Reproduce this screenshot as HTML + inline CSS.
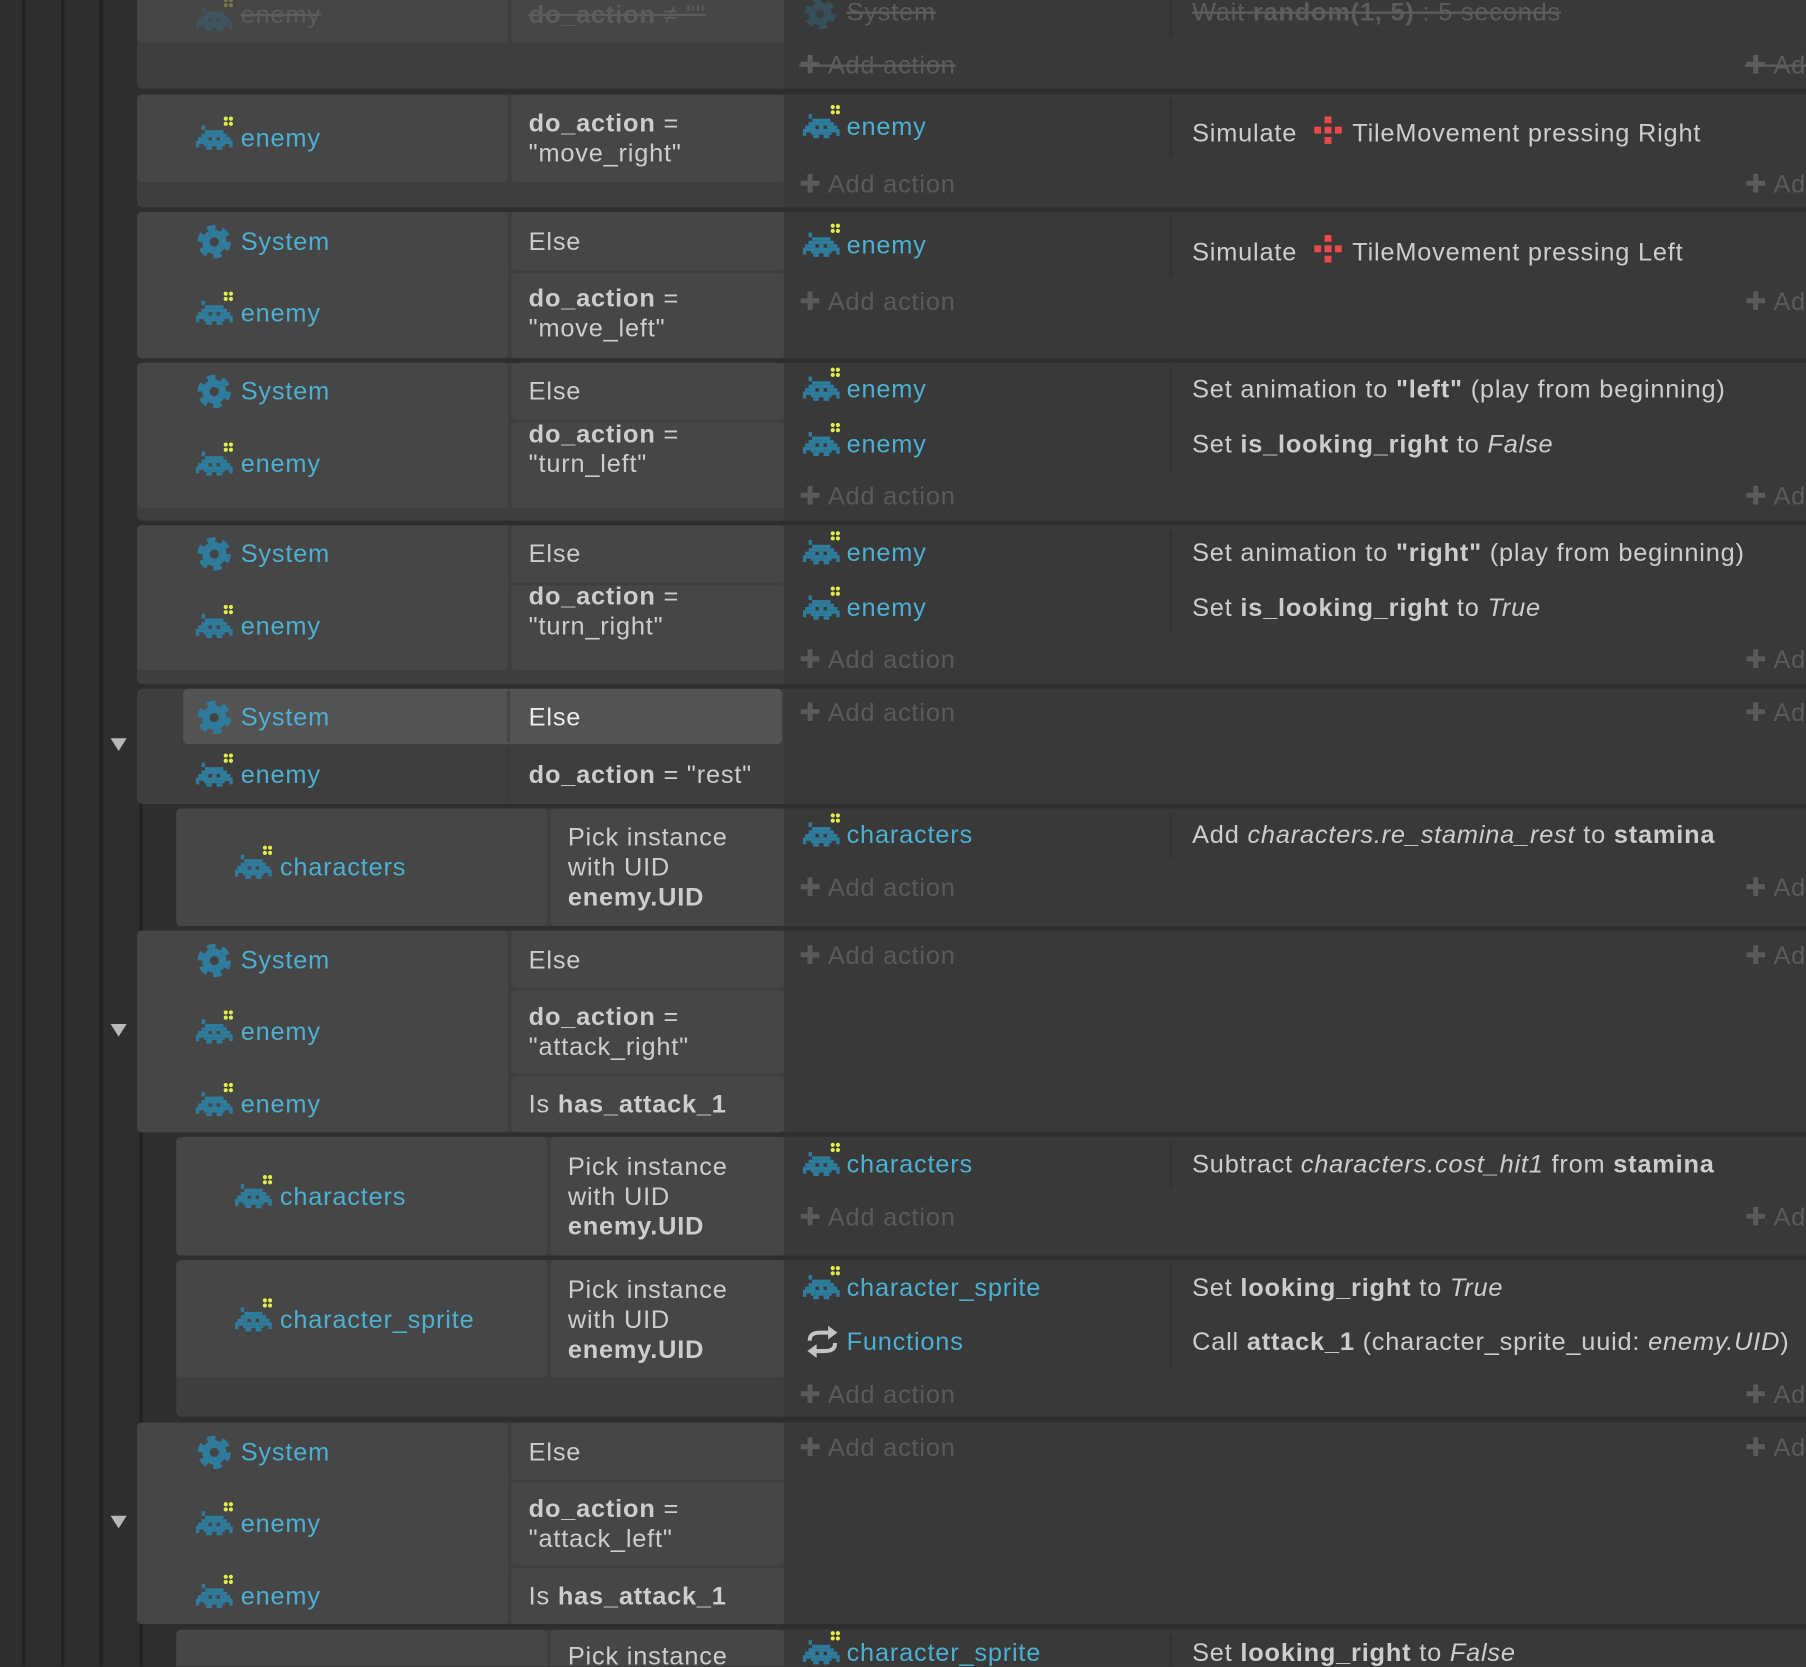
<!DOCTYPE html>
<html><head><meta charset="utf-8">
<style>
html,body{margin:0;padding:0;background:#2c2c2c;overflow:hidden;width:1806px;height:1666px}
#w{position:absolute;left:0;top:0;width:1568px;height:1447px;transform:scale(1.15179);transform-origin:0 0;overflow:hidden;background:#2e2e2e;font-family:"Liberation Sans",sans-serif}
.ln{position:absolute;top:0;height:1447px;width:3px;background:#222}
.blk{position:absolute;left:119px;width:1460px;background:#3e3e3e;border-radius:5px}
.sub{left:153px}
.act{position:absolute;left:681px;width:900px;background:#393939}
.cell{position:absolute;background:#464646;border-radius:4px}
.sep{position:absolute;width:3px;background:#3a3a3a}
.asep{position:absolute;left:1015px;width:3px;background:#333}
.t{position:absolute;font-size:22px;line-height:26px;white-space:nowrap;color:#cdcdcd;letter-spacing:0.7px}
.o{color:#4bb0d2}
.add{color:#5a5a5a}
.dis{color:#5c5c5c;text-decoration:line-through}
i.x{font-style:italic}
svg.ic{position:absolute}
.tri{position:absolute;left:96px;width:0;height:0;border-left:7px solid transparent;border-right:7px solid transparent;border-top:11px solid #b8b8b8}
</style></head><body><div id="w">
<svg width="0" height="0" style="position:absolute">
<defs>
<symbol id="inv" viewBox="0 0 34 30">
<g fill="#2f7b9b">
<rect x="5" y="8" width="3" height="4"/>
<rect x="8" y="12" width="16" height="3"/>
<rect x="5" y="15" width="22" height="3"/>
<rect x="2" y="18" width="9" height="3"/><rect x="14" y="18" width="4" height="3"/><rect x="21" y="18" width="9" height="3"/>
<rect x="2" y="21" width="28" height="3"/>
<rect x="0" y="21" width="3" height="6"/><rect x="29" y="21" width="3" height="6"/>
<rect x="7" y="24" width="18" height="2"/>
<rect x="9" y="26" width="5" height="3"/><rect x="18" y="26" width="5" height="3"/>
</g>
<g fill="#e3ee4a"><circle cx="26" cy="2" r="1.8"/><circle cx="30.5" cy="2" r="1.8"/><circle cx="26" cy="6.5" r="1.8"/><circle cx="30.5" cy="6.5" r="1.8"/></g>
</symbol>
<symbol id="gear" viewBox="0 0 30 30">
<circle cx="15" cy="15" r="11" fill="none" stroke="#2f7b9b" stroke-width="7" stroke-dasharray="6.5 5"/>
<circle cx="15" cy="15" r="10.5" fill="#2f7b9b"/>
<circle cx="15" cy="15" r="4" fill="#444"/>
</symbol>
<symbol id="dpad" viewBox="0 0 24 24">
<g fill="#e84a4a"><rect x="9" y="0" width="6" height="6"/><rect x="0" y="9" width="6" height="6"/><rect x="9" y="9" width="6" height="6"/><rect x="18" y="9" width="6" height="6"/><rect x="9" y="18" width="6" height="6"/></g>
</symbol>
<symbol id="fn" viewBox="0 0 30 30">
<g fill="none" stroke="#c4c4c4" stroke-width="3.5"><path d="M4 14 C4 8 8 7 14 7 L22 7"/><path d="M26 16 C26 22 22 23 16 23 L8 23"/></g>
<g fill="#c4c4c4"><path d="M20 1 L28 7 L20 13Z"/><path d="M10 17 L2 23 L10 29Z"/></g>
</symbol>
</defs></svg>

<div class="ln" style="left:19px"></div>
<div class="ln" style="left:53px"></div>
<div class="ln" style="left:86px"></div>
<div style="position:absolute;left:121px;top:698px;width:3px;height:110px;background:#222"></div>
<div style="position:absolute;left:121px;top:983px;width:3px;height:252px;background:#222"></div>
<div style="position:absolute;left:121px;top:1410px;width:3px;height:40px;background:#222"></div>

<!-- E0 -->
<div class="blk" style="top:-10px;height:87px"></div>
<div class="cell" style="left:119px;top:-10px;width:322px;height:47px"></div>
<div class="cell" style="left:444px;top:-10px;width:237px;height:47px"></div>
<div class="act" style="top:0;height:77px"></div>
<div class="asep" style="top:0;height:32px"></div>
<svg class="ic" style="left:170px;top:-2px" width="34" height="30"><use href="#inv" opacity="0.3"/></svg>
<div class="t dis" style="left:209px;top:0">enemy</div>
<div class="t dis" style="left:459px;top:0"><b>do_action</b> ≠ ""</div>
<svg class="ic" style="left:698px;top:-2px" width="28" height="28"><use href="#gear" opacity="0.35"/></svg>
<div class="t dis" style="left:735px;top:-2px">System</div>
<div class="t dis" style="left:1035px;top:-2px">Wait <b>random(1, 5)</b> : 5 seconds</div>
<div class="t dis" style="left:694px;top:44px">✚ Add action</div>
<div class="t dis" style="left:1515px;top:44px">✚ Add action</div>

<!-- E1 -->
<div class="blk" style="top:82px;height:98px"></div>
<div class="cell" style="left:119px;top:82px;width:322px;height:76px"></div>
<div class="cell" style="left:444px;top:82px;width:237px;height:76px"></div>
<div class="act" style="top:82px;height:98px"></div>
<div class="asep" style="top:86px;height:50px"></div>
<svg class="ic" style="left:170px;top:101px" width="34" height="30"><use href="#inv"/></svg>
<div class="t o" style="left:209px;top:107px">enemy</div>
<div class="t" style="left:459px;top:94px"><b>do_action</b> =</div>
<div class="t" style="left:459px;top:120px">"move_right"</div>
<svg class="ic" style="left:697px;top:91px" width="34" height="30"><use href="#inv"/></svg>
<div class="t o" style="left:735px;top:97px">enemy</div>
<div class="t" style="left:1035px;top:101px">Simulate <svg width="24" height="24" style="vertical-align:-2px;margin:0 9px 0 8px"><use href="#dpad"/></svg>TileMovement pressing Right</div>
<div class="t add" style="left:694px;top:147px">✚ Add action</div>
<div class="t add" style="left:1515px;top:147px">✚ Add action</div>

<!-- E2 -->
<div class="blk" style="top:184px;height:127px"></div>
<div class="cell" style="left:119px;top:184px;width:322px;height:127px"></div>
<div class="cell" style="left:444px;top:184px;width:237px;height:51px"></div>
<div class="cell" style="left:444px;top:237px;width:237px;height:74px"></div>
<div class="act" style="top:184px;height:127px"></div>
<div class="asep" style="top:188px;height:52px"></div>
<svg class="ic" style="left:171px;top:195px" width="30" height="30"><use href="#gear"/></svg>
<div class="t o" style="left:209px;top:197px">System</div>
<div class="t" style="left:459px;top:197px">Else</div>
<svg class="ic" style="left:170px;top:253px" width="34" height="30"><use href="#inv"/></svg>
<div class="t o" style="left:209px;top:259px">enemy</div>
<div class="t" style="left:459px;top:246px"><b>do_action</b> =</div>
<div class="t" style="left:459px;top:272px">"move_left"</div>
<svg class="ic" style="left:697px;top:194px" width="34" height="30"><use href="#inv"/></svg>
<div class="t o" style="left:735px;top:200px">enemy</div>
<div class="t" style="left:1035px;top:204px">Simulate <svg width="24" height="24" style="vertical-align:-2px;margin:0 9px 0 8px"><use href="#dpad"/></svg>TileMovement pressing Left</div>
<div class="t add" style="left:694px;top:249px">✚ Add action</div>
<div class="t add" style="left:1515px;top:249px">✚ Add action</div>

<!-- E3 -->
<div class="blk" style="top:315px;height:137px"></div>
<div class="cell" style="left:119px;top:315px;width:322px;height:126px"></div>
<div class="cell" style="left:444px;top:315px;width:237px;height:50px"></div>
<div class="cell" style="left:444px;top:367px;width:237px;height:74px"></div>
<div class="act" style="top:315px;height:137px"></div>
<div class="asep" style="top:319px;height:90px"></div>
<svg class="ic" style="left:171px;top:325px" width="30" height="30"><use href="#gear"/></svg>
<div class="t o" style="left:209px;top:327px">System</div>
<div class="t" style="left:459px;top:327px">Else</div>
<svg class="ic" style="left:170px;top:384px" width="34" height="30"><use href="#inv"/></svg>
<div class="t o" style="left:209px;top:390px">enemy</div>
<div class="t" style="left:459px;top:364px"><b>do_action</b> =</div>
<div class="t" style="left:459px;top:390px">"turn_left"</div>
<svg class="ic" style="left:697px;top:319px" width="34" height="30"><use href="#inv"/></svg>
<div class="t o" style="left:735px;top:325px">enemy</div>
<div class="t" style="left:1035px;top:325px">Set animation to <b>"left"</b> (play from beginning)</div>
<svg class="ic" style="left:697px;top:367px" width="34" height="30"><use href="#inv"/></svg>
<div class="t o" style="left:735px;top:373px">enemy</div>
<div class="t" style="left:1035px;top:373px">Set <b>is_looking_right</b> to <i class="x">False</i></div>
<div class="t add" style="left:694px;top:418px">✚ Add action</div>
<div class="t add" style="left:1515px;top:418px">✚ Add action</div>

<!-- E4 -->
<div class="blk" style="top:456px;height:138px"></div>
<div class="cell" style="left:119px;top:456px;width:322px;height:126px"></div>
<div class="cell" style="left:444px;top:456px;width:237px;height:50px"></div>
<div class="cell" style="left:444px;top:508px;width:237px;height:74px"></div>
<div class="act" style="top:456px;height:138px"></div>
<div class="asep" style="top:460px;height:90px"></div>
<svg class="ic" style="left:171px;top:466px" width="30" height="30"><use href="#gear"/></svg>
<div class="t o" style="left:209px;top:468px">System</div>
<div class="t" style="left:459px;top:468px">Else</div>
<svg class="ic" style="left:170px;top:525px" width="34" height="30"><use href="#inv"/></svg>
<div class="t o" style="left:209px;top:531px">enemy</div>
<div class="t" style="left:459px;top:505px"><b>do_action</b> =</div>
<div class="t" style="left:459px;top:531px">"turn_right"</div>
<svg class="ic" style="left:697px;top:461px" width="34" height="30"><use href="#inv"/></svg>
<div class="t o" style="left:735px;top:467px">enemy</div>
<div class="t" style="left:1035px;top:467px">Set animation to <b>"right"</b> (play from beginning)</div>
<svg class="ic" style="left:697px;top:509px" width="34" height="30"><use href="#inv"/></svg>
<div class="t o" style="left:735px;top:515px">enemy</div>
<div class="t" style="left:1035px;top:515px">Set <b>is_looking_right</b> to <i class="x">True</i></div>
<div class="t add" style="left:694px;top:560px">✚ Add action</div>
<div class="t add" style="left:1515px;top:560px">✚ Add action</div>

<!-- E5 -->
<div class="blk" style="top:598px;height:100px"></div>
<div class="cell" style="left:159px;top:598px;width:520px;height:48px;background:#535353"></div>
<div class="sep" style="left:440px;top:600px;height:44px;background:#464646"></div>
<div class="sep" style="left:440px;top:650px;height:46px"></div>
<div class="act" style="top:598px;height:100px"></div>
<div class="tri" style="top:641px"></div>
<svg class="ic" style="left:171px;top:608px" width="30" height="30"><use href="#gear"/></svg>
<div class="t o" style="left:209px;top:610px">System</div>
<div class="t" style="left:459px;top:610px;color:#ececec">Else</div>
<svg class="ic" style="left:170px;top:654px" width="34" height="30"><use href="#inv"/></svg>
<div class="t o" style="left:209px;top:660px">enemy</div>
<div class="t" style="left:459px;top:660px"><b>do_action</b> = "rest"</div>
<div class="t add" style="left:694px;top:606px">✚ Add action</div>
<div class="t add" style="left:1515px;top:606px">✚ Add action</div>

<!-- S5a -->
<div class="blk sub" style="top:702px;height:102px"></div>
<div class="cell" style="left:153px;top:702px;width:322px;height:102px"></div>
<div class="cell" style="left:478px;top:702px;width:203px;height:102px"></div>
<div class="act" style="top:702px;height:102px"></div>
<div class="asep" style="top:706px;height:40px"></div>
<svg class="ic" style="left:204px;top:734px" width="34" height="30"><use href="#inv"/></svg>
<div class="t o" style="left:243px;top:740px">characters</div>
<div class="t" style="left:493px;top:714px">Pick instance</div>
<div class="t" style="left:493px;top:740px">with UID</div>
<div class="t" style="left:493px;top:766px"><b>enemy.UID</b></div>
<svg class="ic" style="left:697px;top:706px" width="34" height="30"><use href="#inv"/></svg>
<div class="t o" style="left:735px;top:712px">characters</div>
<div class="t" style="left:1035px;top:712px">Add <i class="x">characters.re_stamina_rest</i> to <b>stamina</b></div>
<div class="t add" style="left:694px;top:758px">✚ Add action</div>
<div class="t add" style="left:1515px;top:758px">✚ Add action</div>

<!-- E6 -->
<div class="blk" style="top:808px;height:175px"></div>
<div class="cell" style="left:119px;top:808px;width:322px;height:175px"></div>
<div class="cell" style="left:444px;top:808px;width:237px;height:50px"></div>
<div class="cell" style="left:444px;top:860px;width:237px;height:72px"></div>
<div class="cell" style="left:444px;top:934px;width:237px;height:49px"></div>
<div class="act" style="top:808px;height:175px"></div>
<div class="tri" style="top:889px"></div>
<svg class="ic" style="left:171px;top:819px" width="30" height="30"><use href="#gear"/></svg>
<div class="t o" style="left:209px;top:821px">System</div>
<div class="t" style="left:459px;top:821px">Else</div>
<svg class="ic" style="left:170px;top:877px" width="34" height="30"><use href="#inv"/></svg>
<div class="t o" style="left:209px;top:883px">enemy</div>
<div class="t" style="left:459px;top:870px"><b>do_action</b> =</div>
<div class="t" style="left:459px;top:896px">"attack_right"</div>
<svg class="ic" style="left:170px;top:940px" width="34" height="30"><use href="#inv"/></svg>
<div class="t o" style="left:209px;top:946px">enemy</div>
<div class="t" style="left:459px;top:946px">Is <b>has_attack_1</b></div>
<div class="t add" style="left:694px;top:817px">✚ Add action</div>
<div class="t add" style="left:1515px;top:817px">✚ Add action</div>

<!-- S6a -->
<div class="blk sub" style="top:987px;height:103px"></div>
<div class="cell" style="left:153px;top:987px;width:322px;height:103px"></div>
<div class="cell" style="left:478px;top:987px;width:203px;height:103px"></div>
<div class="act" style="top:987px;height:103px"></div>
<div class="asep" style="top:991px;height:40px"></div>
<svg class="ic" style="left:204px;top:1020px" width="34" height="30"><use href="#inv"/></svg>
<div class="t o" style="left:243px;top:1026px">characters</div>
<div class="t" style="left:493px;top:1000px">Pick instance</div>
<div class="t" style="left:493px;top:1026px">with UID</div>
<div class="t" style="left:493px;top:1052px"><b>enemy.UID</b></div>
<svg class="ic" style="left:697px;top:992px" width="34" height="30"><use href="#inv"/></svg>
<div class="t o" style="left:735px;top:998px">characters</div>
<div class="t" style="left:1035px;top:998px">Subtract <i class="x">characters.cost_hit1</i> from <b>stamina</b></div>
<div class="t add" style="left:694px;top:1044px">✚ Add action</div>
<div class="t add" style="left:1515px;top:1044px">✚ Add action</div>

<!-- S6b -->
<div class="blk sub" style="top:1094px;height:136px"></div>
<div class="cell" style="left:153px;top:1094px;width:322px;height:102px"></div>
<div class="cell" style="left:478px;top:1094px;width:203px;height:102px"></div>
<div class="act" style="top:1094px;height:136px"></div>
<div class="asep" style="top:1098px;height:90px"></div>
<svg class="ic" style="left:204px;top:1127px" width="34" height="30"><use href="#inv"/></svg>
<div class="t o" style="left:243px;top:1133px">character_sprite</div>
<div class="t" style="left:493px;top:1107px">Pick instance</div>
<div class="t" style="left:493px;top:1133px">with UID</div>
<div class="t" style="left:493px;top:1159px"><b>enemy.UID</b></div>
<svg class="ic" style="left:697px;top:1099px" width="34" height="30"><use href="#inv"/></svg>
<div class="t o" style="left:735px;top:1105px">character_sprite</div>
<div class="t" style="left:1035px;top:1105px">Set <b>looking_right</b> to <i class="x">True</i></div>
<svg class="ic" style="left:699px;top:1150px" width="30" height="30"><use href="#fn"/></svg>
<div class="t o" style="left:735px;top:1152px">Functions</div>
<div class="t" style="left:1035px;top:1152px">Call <b>attack_1</b> (character_sprite_uuid: <i class="x">enemy.UID</i>)</div>
<div class="t add" style="left:694px;top:1198px">✚ Add action</div>
<div class="t add" style="left:1515px;top:1198px">✚ Add action</div>

<!-- E7 -->
<div class="blk" style="top:1235px;height:175px"></div>
<div class="cell" style="left:119px;top:1235px;width:322px;height:175px"></div>
<div class="cell" style="left:444px;top:1235px;width:237px;height:50px"></div>
<div class="cell" style="left:444px;top:1287px;width:237px;height:72px"></div>
<div class="cell" style="left:444px;top:1361px;width:237px;height:49px"></div>
<div class="act" style="top:1235px;height:175px"></div>
<div class="tri" style="top:1316px"></div>
<svg class="ic" style="left:171px;top:1246px" width="30" height="30"><use href="#gear"/></svg>
<div class="t o" style="left:209px;top:1248px">System</div>
<div class="t" style="left:459px;top:1248px">Else</div>
<svg class="ic" style="left:170px;top:1304px" width="34" height="30"><use href="#inv"/></svg>
<div class="t o" style="left:209px;top:1310px">enemy</div>
<div class="t" style="left:459px;top:1297px"><b>do_action</b> =</div>
<div class="t" style="left:459px;top:1323px">"attack_left"</div>
<svg class="ic" style="left:170px;top:1367px" width="34" height="30"><use href="#inv"/></svg>
<div class="t o" style="left:209px;top:1373px">enemy</div>
<div class="t" style="left:459px;top:1373px">Is <b>has_attack_1</b></div>
<div class="t add" style="left:694px;top:1244px">✚ Add action</div>
<div class="t add" style="left:1515px;top:1244px">✚ Add action</div>

<!-- S7a -->
<div class="blk sub" style="top:1415px;height:60px"></div>
<div class="cell" style="left:153px;top:1415px;width:322px;height:60px"></div>
<div class="cell" style="left:478px;top:1415px;width:203px;height:60px"></div>
<div class="act" style="top:1415px;height:60px"></div>
<div class="asep" style="top:1419px;height:40px"></div>
<div class="t" style="left:493px;top:1425px">Pick instance</div>
<svg class="ic" style="left:697px;top:1416px" width="34" height="30"><use href="#inv"/></svg>
<div class="t o" style="left:735px;top:1422px">character_sprite</div>
<div class="t" style="left:1035px;top:1422px">Set <b>looking_right</b> to <i class="x">False</i></div>
</div></body></html>
